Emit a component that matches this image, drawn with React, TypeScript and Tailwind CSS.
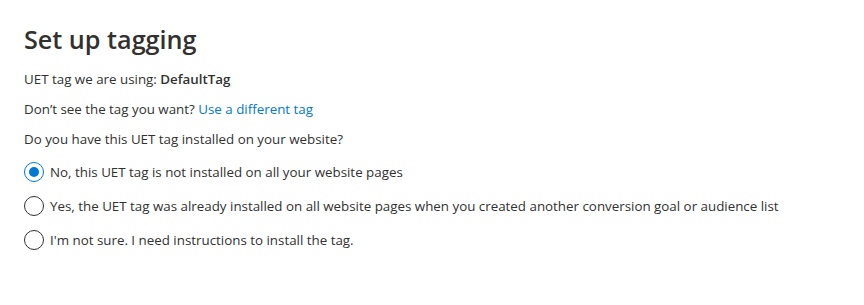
import React from "react";

function Radio({ checked }: { checked?: boolean }) {
  return checked ? (
    <span className="flex h-[20px] w-[20px] shrink-0 items-center justify-center rounded-full border border-[#0078d4]">
      <span className="h-[10px] w-[10px] rounded-full bg-[#0078d4]" />
    </span>
  ) : (
    <span className="h-[20px] w-[20px] shrink-0 rounded-full border border-[#323130]" />
  );
}

export default function App() {
  const options = [
    { label: "No, this UET tag is not installed on all your website pages", checked: true },
    {
      label:
        "Yes, the UET tag was already installed on all website pages when you created another conversion goal or audience list",
    },
    { label: "I'm not sure. I need instructions to install the tag." },
  ];
  return (
    <div
      className="h-[305px] w-[864px] bg-white pl-[24px] pt-[22px] text-[13.35px] text-[#323130]"
      style={{ fontFamily: '"Open Sans", "Noto Sans", sans-serif' }}
    >
      <h1 className="text-[25.2px] font-semibold leading-[34px]">Set up tagging</h1>
      <div className="mt-[14px] flex flex-col gap-[12px] leading-[18px]">
        <p>
          UET tag we are using: <span className="font-semibold">DefaultTag</span>
        </p>
        <p>
          Don’t see the tag you want? <a className="text-[#0078d4]">Use a different tag</a>
        </p>
        <p>Do you have this UET tag installed on your website?</p>
      </div>
      <div className="mt-[14px] flex flex-col gap-[14px]">
        {options.map((o, i) => (
          <label key={i} className="flex items-center gap-[6px] leading-[20px]">
            <Radio checked={o.checked} />
            <span>{o.label}</span>
          </label>
        ))}
      </div>
    </div>
  );
}
